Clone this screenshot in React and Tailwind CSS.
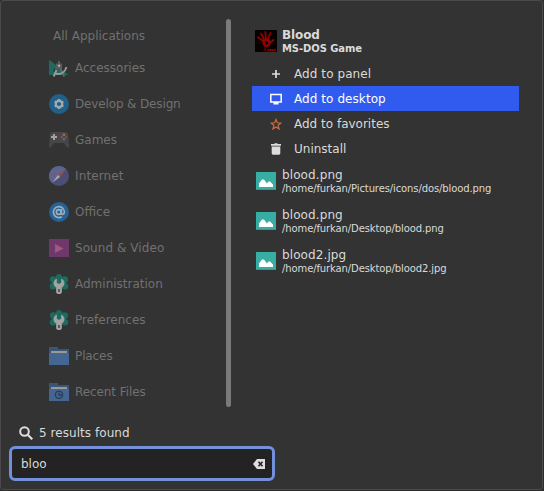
const Accessories = () => (
  <svg width="20" height="20" viewBox="0 0 20 20">
    <path d="M0 1.500V17h19.500z" fill="#1d6a5e" />
    <path d="M4.500 10v4h4z" fill="#333" />
    <path d="M9.200 3h1.600v3H9.200z" fill="#666" />
    <path d="M7 5.500h6V11H7z" fill="#5c5c5c" />
    <path d="m11.500 11 3.800 7.500" stroke="#666" strokeWidth="1.800" />
    <circle cx="10" cy="7.700" r="1.200" fill="#aaa" />
    <path d="M5.500 15.500c6 1.500 10.500-1 12-6.500M7.500 12 4.700 18.500" fill="none" stroke="#9a9a9a" strokeWidth="1.900" />
  </svg>
);

const Develop = () => (
  <svg width="20" height="20" viewBox="0 0 20 20">
    <circle cx="10" cy="10" r="10" fill="#1f6188" />
    <circle cx="10" cy="10" r="3.200" fill="none" stroke="#a6a9ab" strokeWidth="2.200" />
    <g fill="none" stroke="#a6a9ab" strokeWidth="2.600">
      <path d="M10 5v1.400M10 13.600V15M5.700 7.500l1.200.7M13.100 11.800l1.200.7M5.700 12.500l1.200-.7M13.100 8.200l1.200-.7" />
    </g>
  </svg>
);

const Games = () => (
  <svg width="20" height="20" viewBox="0 0 20 20">
    <path d="M4 2h12c2 0 3 1 3.200 3L20 16.500c0 1.300-1.500 1.500-2.200.5L15 13H5l-2.800 4C1.500 18 0 17.800 0 16.500L.8 5C1 3 2 2 4 2z" fill="#474747" />
    <path d="M5 4v6M2 7h6" stroke="#a2a2a2" strokeWidth="2" />
    <circle cx="15" cy="4.800" r="1.300" fill="#92794a" />
    <circle cx="12.800" cy="7" r="1.300" fill="#875047" />
    <circle cx="17.200" cy="7" r="1.300" fill="#923f3c" />
    <circle cx="15" cy="9.200" r="1.300" fill="#506a82" />
  </svg>
);

const Internet = () => (
  <svg width="20" height="20" viewBox="0 0 20 20">
    <circle cx="10" cy="10" r="10" fill="#4c4e75" />
    <path d="M17 2.900A10 10 0 0 0 2.900 17.100z" fill="#60648d" />
    <path d="M16.500 3.500 8.900 8.900l2.200 2.200z" fill="#9c4a42" />
    <path d="M3.500 16.500 8.900 8.900l2.200 2.200z" fill="#a5a7b1" />
  </svg>
);

const Office = () => (
  <svg width="20" height="20" viewBox="0 0 20 20">
    <circle cx="10" cy="10" r="10" fill="#256296" />
    <g fill="none" stroke="#a3aeb8" strokeWidth="1.600">
      <circle cx="9.800" cy="10" r="2.400" />
      <path d="M12.400 7v4.300c0 1.500 3 1.600 3-1.300a5.500 5.500 0 1 0-2.600 4.800" />
    </g>
  </svg>
);

const Media = () => (
  <svg width="20" height="20" viewBox="0 0 20 20">
    <path d="M0 1h20v18H0z" fill="#70376c" />
    <path d="m6 6 8.500 4.500L6 15z" fill="#a1587c" />
  </svg>
);

const Wrench = () => (
  <svg width="20" height="20" viewBox="0 0 20 20">
    <g fill="#1d6a5e">
      <circle cx="10" cy="8.800" r="7" />
      <circle cx="10" cy="3" r="3" />
      <circle cx="4.200" cy="5.500" r="3.300" />
      <circle cx="15.800" cy="5.500" r="3.300" />
      <circle cx="4" cy="12.200" r="3.300" />
      <circle cx="16" cy="12.200" r="3.300" />
    </g>
    <path d="M7.500 5v3.500L9 10h2l1.500-1.500V5c3.300 1.500 3.600 6.500 0 8.600V18c0 2.700-5 2.700-5 0v-4.400c-3.600-2.100-3.300-7.100 0-8.600z" fill="#a3a3a3" stroke="#a3a3a3" strokeWidth=".7" />
    <path d="M9 15h2v3H9z" fill="#5a5a5a" />
  </svg>
);

const Folder = ({ clock }) => (
  <svg width="20" height="20" viewBox="0 0 20 20">
    <path d="M0 1h9v2h11v8H0z" fill="#3a5578" />
    <path d="M2 5h16v3H2z" fill="#999" />
    <path d="M0 7h20v12H0z" fill="#436692" />
    {clock && (
      <g fill="none" stroke="#293b55" strokeWidth="1.300">
        <circle cx="10" cy="12.800" r="3.600" />
        <path d="M10 10.500V13h2.500" />
      </g>
    )}
  </svg>
);

const Picture = () => (
  <svg width="20" height="18" viewBox="0 0 20 18" className="shrink-0">
    <path d="M0 0h20v18H0z" fill="#38ada3" />
    <path d="M0 17h20v1H0z" fill="#329a91" />
    <path d="M3 15v-3.500L6 7.500h2l3 4 1.500-2h1.500l3 3V15z" fill="#fff" />
  </svg>
);

const BloodIcon = () => (
  <svg width="22" height="22" viewBox="0 0 22 22" className="shrink-0">
    <path d="M0 0h22v22H0z" fill="#060000" />
    <g fill="none" stroke="#930000" strokeLinecap="round">
      <path d="M7.500 10.500 3 7.300M8.500 8.500 6 3.500M10.800 8 10.300 2M13 8.500 15.500 3" strokeWidth="1.800" />
      <path d="m14.500 13 4-3" strokeWidth="2" />
      <path d="M8.500 10.500c2-1.500 4.500-1 5.500.5s.5 3.500-1 4.500-3.500.5-4-1.500z" strokeWidth="2.600" />
      <path d="M10 17v4" strokeWidth="1" />
      <path d="M12.500 20h8.500" strokeWidth="2" strokeDasharray="1.600 .4" strokeLinecap="butt" />
    </g>
  </svg>
);

const Plus = () => (
  <svg width="12" height="12" viewBox="0 0 12 12">
    <path d="M6 2v8M2 6h8" stroke="#ddd" strokeWidth="1.700" />
  </svg>
);
const Monitor = () => (
  <svg width="12" height="12" viewBox="0 0 12 12">
    <path d="M.8 1.500h10.400v7.500H.8z" fill="none" stroke="#fff" strokeWidth="1.500" />
    <path d="M3.500 9h5v2.500h-5z" fill="#fff" />
  </svg>
);
const Star = () => (
  <svg width="12" height="12" viewBox="0 0 12 12">
    <path d="m6 1.400 1.300 3.400 3.700.3-2.900 2.200 1 3.700L6 9l-3.100 2 1-3.700L1 5.100l3.700-.3z" fill="none" stroke="#d9703f" strokeWidth="1.100" />
  </svg>
);
const Trash = () => (
  <svg width="12" height="12" viewBox="0 0 12 12">
    <path d="M1 1h3.500V.3h3V1H11v1.700H1zM1.700 3.500h8.600V10c0 1-.4 1.700-1.400 1.700H3.100c-1 0-1.400-.7-1.400-1.700z" fill="#ddd" />
  </svg>
);

const categories = [
  ["Accessories", <Accessories />, ""],
  ["Develop & Design", <Develop />, "tracking-[-0.14px]"],
  ["Games", <Games />, ""],
  ["Internet", <Internet />, "tracking-[0.12px]"],
  ["Office", <Office />, ""],
  ["Sound & Video", <Media />, "tracking-[0.07px]"],
  ["Administration", <Wrench />, ""],
  ["Preferences", <Wrench />, ""],
  ["Places", <Folder />, "tracking-[-0.1px]"],
  ["Recent Files", <Folder clock />, "tracking-[-0.08px]"],
];

const actions = [
  ["Add to panel", <Plus />, "tracking-[0.08px]"],
  ["Add to desktop", <Monitor />, "tracking-[0.07px]", true],
  ["Add to favorites", <Star />, ""],
  ["Uninstall", <Trash />, ""],
];

const files = [
  ["blood.png", "/home/furkan/Pictures/icons/dos/blood.png"],
  ["blood.png", "/home/furkan/Desktop/blood.png"],
  ["blood2.jpg", "/home/furkan/Desktop/blood2.jpg"],
];

export default function App() {
  return (
    <div className="h-[491px] w-[544px] overflow-hidden bg-[#2d2d2d] font-['DejaVu_Sans',sans-serif] text-[12px] whitespace-nowrap text-[#dadada]">
      <div className="h-[490px] w-[543px] rounded-[3px] border border-[#4a4a4a] bg-[#333]">
        <div className="flex h-[406px] pt-[18px]">
          <nav className="w-[225px] shrink-0 text-[#717171]">
            <div className="flex h-[31px] items-center pt-[2px] pl-[52px]">All Applications</div>
            {categories.map(([name, icon, spacing]) => (
              <div key={name} className="flex h-[36px] items-center gap-[6px] pl-[48px]">
                {icon}
                <span className={spacing}>{name}</span>
              </div>
            ))}
          </nav>
          <div className="h-[388px] w-[5px] shrink-0 rounded-full bg-[#7a7a7a]" />
          <main className="ml-[21px] w-[267px]">
            <div className="flex h-[42px] items-start gap-[5px] pt-[11px] pl-[3px] font-bold">
              <BloodIcon />
              <div className="-mt-[2px]">
                <div className="h-[15px] leading-[15px] tracking-[-0.1px]">Blood</div>
                <div className="text-[10px] leading-[12px] tracking-[-0.08px]">MS-DOS Game</div>
              </div>
            </div>
            {actions.map(([name, icon, spacing, selected]) => (
              <div key={name} className={`flex h-[25px] items-center gap-[12px] pl-[18px] ${selected ? "bg-[#315bef] text-white" : ""}`}>
                {icon}
                <span className={spacing}>{name}</span>
              </div>
            ))}
            {files.map(([name, path]) => (
              <div key={path} className="flex h-[40px] items-center gap-[6px] pl-[4px]">
                <Picture />
                <div>
                  <div className="h-[14px] leading-[14px] tracking-[0.1px]">{name}</div>
                  <div className="text-[10px] leading-[13px] tracking-[-0.11px]">{path}</div>
                </div>
              </div>
            ))}
          </main>
        </div>
        <div className="flex h-[39px] items-end gap-[6px] pb-[5px] pl-[18px]">
          <svg width="14" height="14" viewBox="0 0 14 14" className="mb-px">
            <circle cx="5.500" cy="5.500" r="4.300" fill="none" stroke="#ddd" strokeWidth="2" />
            <path d="m8.700 8.700 4.600 4.600" stroke="#ddd" strokeWidth="2.200" />
          </svg>
          <span className="leading-[15px] tracking-[0.05px]">5 results found</span>
        </div>
        <div className="ml-[8px] flex h-[35px] w-[266px] items-center justify-between rounded-[6px] border-[3px] border-[#7390dd] bg-[#232323] pr-[6px] pl-[9px]">
          <span>bloo</span>
          <svg width="13" height="10" viewBox="0 0 13 10">
            <path d="M4 0h8v10H4L0 5z" fill="#ddd" />
            <path d="m5.500 2.700 4 4.600M9.500 2.700l-4 4.600" stroke="#232323" strokeWidth="1.600" />
          </svg>
        </div>
      </div>
    </div>
  );
}
